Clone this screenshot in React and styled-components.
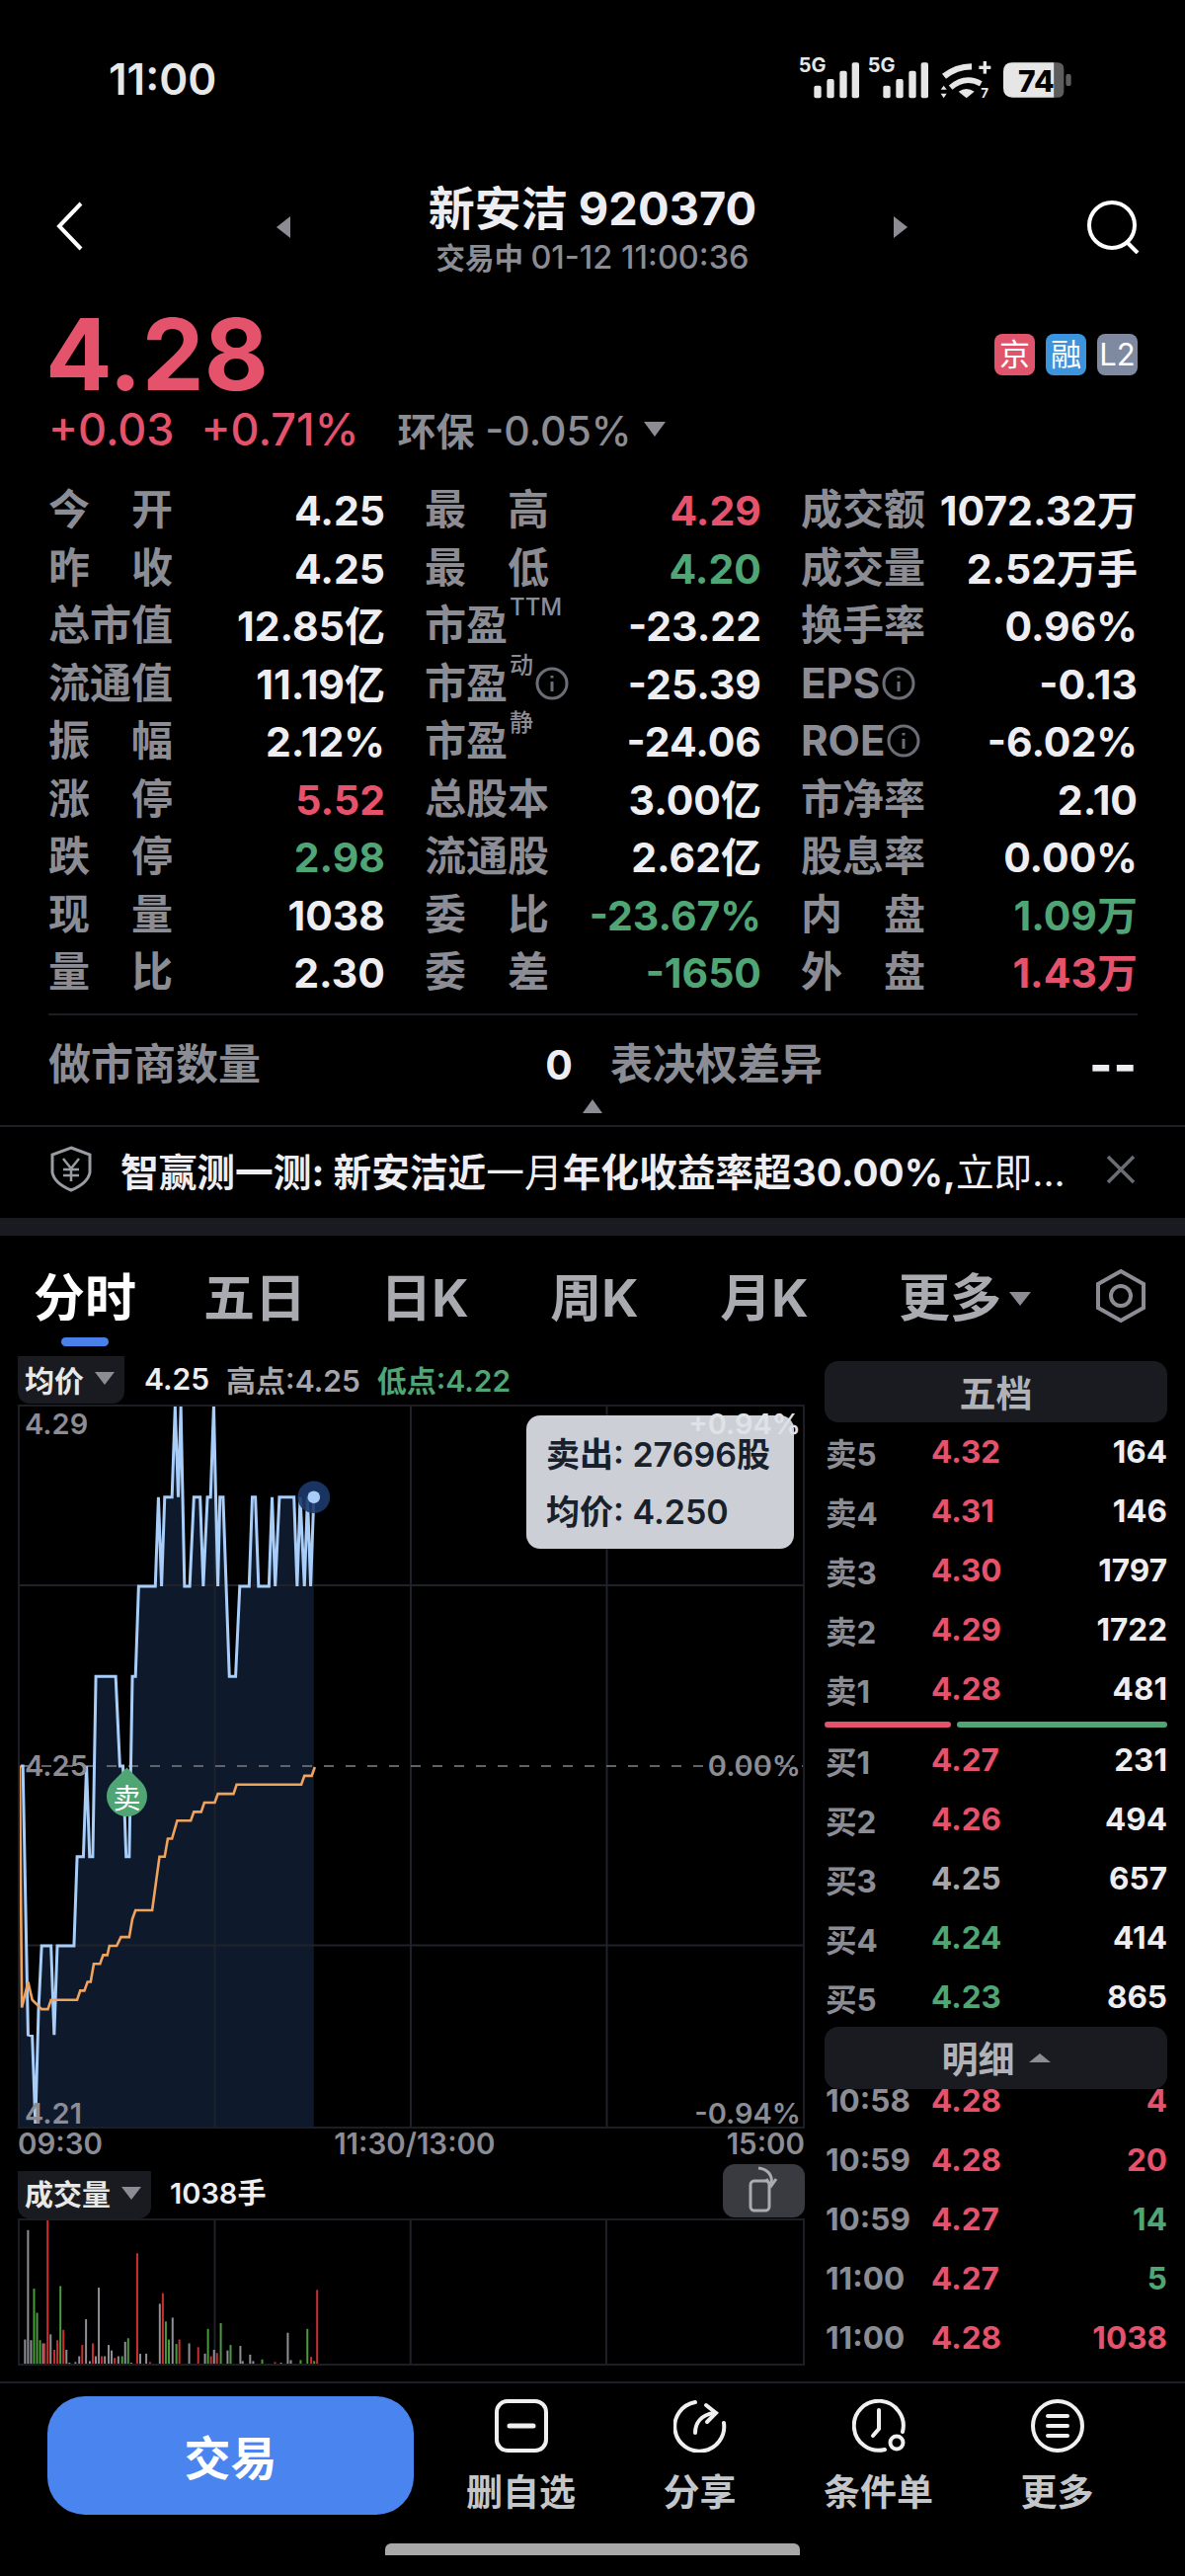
import React from "react";
import styled, { createGlobalStyle } from "styled-components";

const RED = "#e5526b";
const GREEN = "#4fa574";
const GRAY = "#8b8c94";
const WHITE = "#eeeef2";
const LINE = "#1c1e24";
const PANEL = "#1a1b20";

const tones = { red: RED, green: GREEN, gray: "#a5a7ad", white: WHITE };

const Global = createGlobalStyle`
  html, body { margin: 0; background: #000; }
  * { box-sizing: border-box; }
  body { font-family: Inter, "Noto Sans CJK SC", sans-serif; }
`;

const Page = styled.div`
  width: 1200px;
  height: 2608px;
  background: #000;
  color: ${WHITE};
  overflow: hidden;
`;

const StatusBar = styled.div`
  height: 120px;
  padding: 40px 100px 0 110px;
  display: flex;
  justify-content: space-between;
  align-items: center;
`;
const Clock = styled.div`
  font-size: 44px;
  font-weight: 600;
  color: #e8e8e8;
`;

const Nav = styled.div`
  margin-top: 62px;
  height: 96px;
  display: grid;
  grid-template-columns: 280px 15px 1fr 15px 280px;
  align-items: center;
`;
const BackIcon = styled.svg`
  margin-left: 57px;
  margin-top: -3px;
  display: block;
`;
const SearchIcon = styled.svg`
  justify-self: end;
  margin-right: 46px;
  display: block;
`;
const Title = styled.div`
  text-align: center;
  line-height: 56px;
  font-size: 47px;
  font-weight: 700;
`;
const SubTitle = styled.div`
  margin-top: 6px;
  text-align: center;
  line-height: 32px;
  font-size: 29.5px;
  color: ${GRAY};
  font-weight: 600;
  span {
    font-size: 32.5px;
    font-weight: 500;
  }
`;

const Caret = styled.i`
  display: block;
  flex: none;
  width: 0;
  height: 0;
  border-style: solid;
  border-color: transparent;
  ${(p) => p.$dir === "left" && `border-width: ${p.$h}px ${p.$w}px ${p.$h}px 0; border-right-color: ${p.$color};`}
  ${(p) => p.$dir === "right" && `border-width: ${p.$h}px 0 ${p.$h}px ${p.$w}px; border-left-color: ${p.$color};`}
  ${(p) => p.$dir === "down" && `border-width: ${p.$h}px ${p.$w}px 0 ${p.$w}px; border-top-color: ${p.$color};`}
  ${(p) => p.$dir === "up" && `border-width: 0 ${p.$w}px ${p.$h}px ${p.$w}px; border-bottom-color: ${p.$color};`}
`;

const Quote = styled.div`
  padding: 0 48px 0 49px;
`;
const PriceRow = styled.div`
  margin-top: 31px;
  height: 100px;
  display: flex;
  justify-content: space-between;
  align-items: center;
`;
const BigPrice = styled.div`
  margin-left: -3px;
  font-size: 100px;
  line-height: 100px;
  font-weight: 700;
  color: ${RED};
`;
const Tags = styled.div`
  display: flex;
  gap: 11px;
`;
const Tag = styled.span`
  width: 41px;
  height: 42px;
  border-radius: 8px;
  background: ${(p) => p.$bg};
  color: #fff;
  font-size: 31px;
  line-height: 41px;
  text-align: center;
`;
const DeltaRow = styled.div`
  height: 50px;
  display: flex;
  align-items: center;
  font-size: 45px;
  font-weight: 500;
  color: ${RED};
  gap: 27px;
`;
const Sector = styled.div`
  margin-left: 12px;
  display: flex;
  align-items: center;
  gap: 12px;
  font-size: 41px;
  color: ${GRAY};
`;
const SectorName = styled.span`
  font-size: 39px;
  font-weight: 600;
`;

const StatsGrid = styled.div`
  margin-top: 29px;
  display: grid;
  grid-template-columns: repeat(3, 1fr);
  column-gap: 40px;
  grid-auto-rows: 58.5px;
  padding-bottom: 14px;
  height: 539.5px;
  border-bottom: 2px solid ${LINE};
`;
const Stat = styled.div`
  display: flex;
  justify-content: space-between;
  align-items: center;
  white-space: nowrap;
`;
const StatLabel = styled.div`
  margin-top: -2px;
  display: flex;
  align-items: center;
  justify-content: ${(p) => (p.$spread ? "space-between" : "flex-start")};
  width: ${(p) => (p.$spread ? "126px" : "auto")};
  font-size: 42px;
  line-height: 50px;
  font-weight: 700;
  color: ${GRAY};
`;
const Sup = styled.sup`
  font-size: 24px;
  line-height: 1;
  font-weight: 500;
  align-self: flex-start;
  margin-top: -5px;
  margin-left: 2px;
`;
const StatValue = styled.div`
  font-size: 41px;
  line-height: 50px;
  font-weight: 700;
  color: ${(p) => tones[p.$tone || "white"]};
`;
const DashValue = styled(StatValue)`
  font-size: 50px;
  font-weight: 800;
  letter-spacing: 1px;
`;
const InfoIcon = styled.svg`
  display: block;
  margin-left: 2px;
`;

const MakerRow = styled.div`
  margin-top: 20px;
  height: 60px;
  display: grid;
  grid-template-columns: 531px 1fr;
  column-gap: 38px;
  align-items: center;
`;
const MakerLabel = styled(StatLabel)`
  font-size: 43px;
`;
const Collapse = styled.div`
  height: 33px;
  padding-top: 5px;
  display: flex;
  justify-content: center;
  border-bottom: 2px solid ${LINE};
`;

const Banner = styled.div`
  height: 92px;
  padding: 0 50px 6px 51px;
  display: flex;
  align-items: center;
`;
const BannerText = styled.div`
  margin-left: 29px;
  flex: 1;
  font-size: 38.7px;
  font-weight: 700;
  white-space: nowrap;
  overflow: hidden;
  span {
    font-weight: 400;
  }
`;
const Band = styled.div`
  height: 18px;
  background: ${PANEL};
`;

const Tabs = styled.div`
  height: 122px;
  padding-top: 34px;
  display: flex;
  align-items: flex-start;
`;
const Tab = styled.div`
  width: 172px;
  margin-left: ${(p) => p.$shift || 0}px;
  display: flex;
  flex-direction: column;
  align-items: center;
  font-size: 52px;
  line-height: 60px;
  font-weight: 700;
  color: ${(p) => (p.$on ? "#fff" : "#a9abb1")};
`;
const TabLabel = styled.div`
  display: flex;
  align-items: center;
  gap: 8px;
`;
const TabMark = styled.i`
  display: block;
  margin-top: 9px;
  width: 48px;
  height: 9px;
  border-radius: 5px;
  background: #4a80ea;
`;
const HexIcon = styled.svg`
  margin-left: 47px;
  display: block;
`;

const Main = styled.div`
  padding-left: 18px;
  display: grid;
  grid-template-columns: 797px 347px;
  column-gap: 20px;
`;
const LeftCol = styled.div`
  padding-bottom: 16px;
`;
const RightCol = styled.div`
  padding-top: 5px;
`;

const ChartHead = styled.div`
  height: 49px;
  display: flex;
  align-items: center;
  font-size: 30px;
  font-weight: 600;
`;
const Chip = styled.div`
  height: 48px;
  padding: 0 10px 3px 7px;
  margin-right: ${(p) => p.$gap}px;
  display: flex;
  align-items: center;
  gap: 11px;
  border-radius: 0 0 12px 12px;
  background: ${PANEL};
  font-weight: 700;
  color: #e8e8e8;
`;
const HeadText = styled.span`
  margin-right: 17px;
  margin-bottom: 3px;
  color: ${(p) => tones[p.$tone || "white"]};
`;

const ChartFrame = styled.div`
  position: relative;
  width: 797px;
  height: 733px;
  border: 2px solid ${LINE};
  svg {
    display: block;
  }
`;
const AxisLabel = styled.span`
  position: absolute;
  top: ${(p) => p.$top}px;
  ${(p) => (p.$right ? "right: 2px;" : "left: 5px;")}
  font-size: 29px;
  line-height: 36px;
  font-weight: 600;
  color: ${(p) => p.$color || GRAY};
`;
const Tooltip = styled.div`
  position: absolute;
  left: 513px;
  top: 9px;
  width: 271px;
  height: 135px;
  padding: 11px 0 0 20px;
  border-radius: 14px;
  background: #ccd0d6;
  color: #18202c;
  font-size: 34px;
  line-height: 58px;
  font-weight: 600;
`;
const Drop = styled.div`
  position: absolute;
  left: 88px;
  top: 374px;
  width: 41px;
  height: 41px;
  border-radius: 50% 0 50% 50%;
  background: ${GREEN};
  transform: rotate(-45deg);
  display: flex;
  align-items: center;
  justify-content: center;
  span {
    transform: rotate(45deg);
    color: #fff;
    font-size: 28px;
  }
`;

const TimeAxis = styled.div`
  height: 36px;
  padding-bottom: 6px;
  display: flex;
  justify-content: space-between;
  align-items: center;
  font-size: 29.5px;
  font-weight: 600;
  color: ${GRAY};
`;
const VolHead = styled.div`
  height: 55px;
  display: flex;
  align-items: flex-end;
  font-size: 29px;
  font-weight: 600;
  > span {
    margin-bottom: 7px;
  }
`;
const RotateBtn = styled.div`
  margin-left: auto;
  align-self: flex-start;
  width: 83px;
  height: 54px;
  border-radius: 12px;
  background: #3a3b40;
  svg {
    display: block;
  }
`;
const VolFrame = styled.div`
  width: 797px;
  height: 149px;
  border: 2px solid ${LINE};
  svg {
    display: block;
  }
`;

const PanelHead = styled.div`
  position: relative;
  z-index: 1;
  height: ${(p) => p.$h}px;
  display: flex;
  align-items: center;
  justify-content: center;
  gap: 14px;
  border-radius: 14px;
  background: ${PANEL};
  font-size: 37px;
  font-weight: 700;
  color: #b0b2b8;
`;
const BookRow = styled.div`
  height: 60px;
  padding-left: 1px;
  display: grid;
  grid-template-columns: 107px 1fr auto;
  align-items: center;
  font-size: 31.5px;
  font-weight: 700;
`;
const BookLabel = styled.span`
  color: ${GRAY};
`;
const BookPrice = styled.span`
  color: ${(p) => tones[p.$tone]};
`;
const BookQty = styled.span`
  color: ${(p) => tones[p.$tone || "white"]};
`;
const SplitBar = styled.div`
  margin: 3px 0;
  height: 6px;
  display: flex;
  gap: 6px;
`;
const SplitPart = styled.i`
  display: block;
  width: ${(p) => p.$w}px;
  border-radius: 3px;
  background: ${(p) => p.$color};
`;
const TradeList = styled.div`
  margin-top: -18px;
`;

const Footer = styled.div`
  height: 164px;
  padding: 13px 0 0 48px;
  display: flex;
  border-top: 2px solid ${LINE};
`;
const TradeBtn = styled.div`
  width: 371px;
  height: 120px;
  border-radius: 38px;
  background: #4a84ee;
  color: #fff;
  font-size: 47px;
  font-weight: 700;
  display: flex;
  align-items: center;
  justify-content: center;
`;
const Actions = styled.div`
  margin-left: 18px;
  display: grid;
  grid-template-columns: repeat(4, 181px);
`;
const Action = styled.div`
  padding-top: 3px;
  display: flex;
  flex-direction: column;
  align-items: center;
  font-size: 37px;
  font-weight: 700;
  line-height: 44px;
  color: #c5c6ca;
  svg {
    display: block;
    margin-bottom: 19px;
  }
`;
const HomeBar = styled.div`
  margin: 0 auto;
  width: 420px;
  height: 12px;
  border-radius: 6px 6px 0 0;
  background: #a8a8a8;
`;

const stats = [
  [["今", "开"], "4.25"], [["最", "高"], "4.29", "red"], ["成交额", "1072.32万"],
  [["昨", "收"], "4.25"], [["最", "低"], "4.20", "green"], ["成交量", "2.52万手"],
  ["总市值", "12.85亿"], ["市盈", "-23.22", null, "TTM"], ["换手率", "0.96%"],
  ["流通值", "11.19亿"], ["市盈", "-25.39", null, "动", true], ["EPS", "-0.13", null, null, true],
  [["振", "幅"], "2.12%"], ["市盈", "-24.06", null, "静"], ["ROE", "-6.02%", null, null, true],
  [["涨", "停"], "5.52", "red"], ["总股本", "3.00亿"], ["市净率", "2.10"],
  [["跌", "停"], "2.98", "green"], ["流通股", "2.62亿"], ["股息率", "0.00%"],
  [["现", "量"], "1038"], [["委", "比"], "-23.67%", "green"], [["内", "盘"], "1.09万", "green"],
  [["量", "比"], "2.30"], [["委", "差"], "-1650", "green"], [["外", "盘"], "1.43万", "red"],
];

const asks = [
  ["卖5", "4.32", "164"], ["卖4", "4.31", "146"], ["卖3", "4.30", "1797"],
  ["卖2", "4.29", "1722"], ["卖1", "4.28", "481"],
];
const bids = [
  ["买1", "4.27", "231", "red"], ["买2", "4.26", "494", "red"], ["买3", "4.25", "657", "gray"],
  ["买4", "4.24", "414", "green"], ["买5", "4.23", "865", "green"],
];
const trades = [
  ["10:58", "4.28", "4", "red"], ["10:59", "4.28", "20", "red"], ["10:59", "4.27", "14", "green"],
  ["11:00", "4.27", "5", "green"], ["11:00", "4.28", "1038", "red"],
];

// traced from the reference, in the chart's own units
const pricePts = "38,816 42,816 52,1338 60,1340 66,1510 72,1290 78,1165 96,1165 102,1338 108,1165 140,1165 146,992 158,992 164,816 170,992 176,992 182,642 220,642 228,816 234,816 240,992 246,992 252,642 258,642 264,467 296,467 302,294 308,467 314,294 328,294 334,118 340,294 345,118 352,467 362,467 370,294 382,294 388,467 396,294 402,294 408,118 416,467 420,294 426,294 438,642 450,642 458,467 476,467 482,294 488,294 494,467 514,467 520,294 526,467 534,294 562,294 568,467 574,294 582,467 588,294 594,467 600,294";
const avgPts = "36,816 40,1285 52,1235 60,1270 78,1288 90,1288 96,1270 146,1270 152,1252 160,1252 166,1235 172,1235 178,1200 190,1200 196,1183 204,1183 208,1165 222,1165 230,1148 246,1148 252,1113 258,1096 290,1096 304,992 314,992 320,957 328,957 338,922 364,922 370,905 384,905 390,887 410,887 416,870 446,870 452,852 576,852 582,835 596,835 602,818";

const volBars = [
  [31, 688, "g"], [35, 348, "g"], [39, 690, "g"], [43, 530, "u"], [47, 605, "u"], [51, 690, "u"], [55, 700, "g"],
  [57, 700, "r"], [61, 315, "r"], [65, 672, "g"], [70, 720, "r"], [74, 690, "r"], [78, 522, "u"], [82, 658, "r"],
  [86, 720, "g"], [90, 760, "g"], [98, 758, "g"], [103, 740, "g"], [107, 705, "r"], [112, 625, "g"], [117, 755, "g"],
  [121, 700, "r"], [125, 740, "g"], [129, 527, "g"], [133, 740, "r"], [137, 740, "g"], [142, 705, "g"], [146, 722, "g"],
  [150, 745, "r"], [155, 740, "g"], [160, 740, "u"], [164, 695, "g"], [168, 684, "u"], [172, 760, "g"], [180, 420, "r"],
  [184, 732, "g"], [192, 732, "g"], [197, 758, "r"], [210, 577, "g"], [214, 544, "r"], [218, 632, "u"], [222, 688, "u"],
  [227, 620, "g"], [232, 702, "u"], [236, 688, "r"], [249, 700, "g"], [261, 712, "r"], [270, 732, "g"], [274, 655, "u"],
  [278, 740, "r"], [282, 720, "g"], [286, 730, "r"], [291, 637, "u"], [300, 722, "g"], [304, 705, "u"], [317, 708, "g"],
  [320, 755, "g"], [330, 735, "g"], [334, 755, "g"], [346, 750, "u"], [363, 758, "r"], [371, 760, "g"], [380, 667, "g"],
  [384, 752, "g"], [397, 752, "u"], [406, 655, "u"], [411, 742, "r"], [415, 755, "u"], [419, 534, "r"],
];
const barColors = { r: "#c9302f", u: "#4a9a3e", g: "#8f9096" };

function StatusIcons() {
  const signal = (dx) => (
    <g fill="#e6e6e6">
      <text x={dx + 86} y="100" fontSize="60" fontWeight="700" fontFamily="Inter, sans-serif">5G</text>
      <rect x={dx + 133} y="140" width="22" height="38" rx="6" />
      <rect x={dx + 172} y="120" width="22" height="58" rx="6" />
      <rect x={dx + 211} y="95" width="22" height="83" rx="6" />
      <rect x={dx + 248} y="70" width="22" height="108" rx="6" />
    </g>
  );
  return (
    <svg width="320" height="80" viewBox="0 0 960 240">
      {signal(0)}
      {signal(210)}
      <g fill="none" stroke="#e6e6e6" strokeLinecap="butt">
        <path d="M528 112 Q565 82 612 82" strokeWidth="19" />
        <path d="M548 146 Q592 108 640 134" strokeWidth="17" />
      </g>
      <g fill="#e6e6e6">
        <path d="M572 158 Q596 142 620 158 L596 178 Z" />
        <path d="M518 152 L527 140 L536 152 Z M518 164 L536 164 L527 178 Z" />
        <rect x="634" y="80" width="36" height="10" />
        <rect x="647" y="66" width="10" height="38" />
        <text x="640" y="178" fontSize="40" fontWeight="700" fontFamily="Inter, sans-serif">7</text>
      </g>
      <path d="M862 70 H872 Q892 70 892 90 V158 Q892 176 872 176 H862 Z" fill="#5d5d5d" />
      <rect x="898" y="105" width="16" height="36" rx="6" fill="#5d5d5d" />
      <path d="M862 70 H736 Q708 70 708 98 V148 Q708 176 736 176 H862 Z" fill="#e6e6e6" />
      <text x="808" y="160" textAnchor="middle" fontSize="90" fontWeight="800" fontFamily="Inter, sans-serif" fill="#000">74</text>
    </svg>
  );
}

function Info() {
  return (
    <InfoIcon width="34" height="36" viewBox="0 0 34 36" fill="none" stroke="#6b6e76" strokeWidth="3">
      <circle cx="17" cy="18" r="15" />
      <path d="M17 16 V26" />
      <path d="M17 10 V12.5" />
    </InfoIcon>
  );
}

function StatCell({ label, value, tone, sup, info }) {
  return (
    <Stat>
      {Array.isArray(label) ? (
        <StatLabel $spread>
          <span>{label[0]}</span>
          <span>{label[1]}</span>
        </StatLabel>
      ) : (
        <StatLabel>
          {label}
          {sup && <Sup>{sup}</Sup>}
          {info && <Info />}
        </StatLabel>
      )}
      <StatValue $tone={tone}>{value}</StatValue>
    </Stat>
  );
}

function PriceChart() {
  return (
    <ChartFrame>
      <svg width="793" height="729" viewBox="36 118 1502 1398" preserveAspectRatio="none">
        <polygon points={`${pricePts} 600,1516 36,1516`} fill="#0e1a2c" />
        <path d="M410 118 V1516 M786 118 V1516 M1162 118 V1516 M36 465 H1538 M36 1164 H1538" stroke="#1f222a" strokeWidth="2" vectorEffect="non-scaling-stroke" />
        <path d="M36 816 H1538" stroke="#60636a" strokeWidth="2" strokeDasharray="10 12" vectorEffect="non-scaling-stroke" />
        <polyline points={pricePts} fill="none" stroke="#a8cdf8" strokeWidth="3" vectorEffect="non-scaling-stroke" />
        <polyline points={avgPts} fill="none" stroke="#efa35c" strokeWidth="2.6" vectorEffect="non-scaling-stroke" />
        <circle cx="600" cy="294" r="31" fill="#1d3a6b" fillOpacity="0.9" />
        <circle cx="600" cy="294" r="12" fill="#a8cdf8" />
      </svg>
      <AxisLabel $top={0}>4.29</AxisLabel>
      <AxisLabel $top={346}>4.25</AxisLabel>
      <AxisLabel $top={698}>4.21</AxisLabel>
      <AxisLabel $top={346} $right>0.00%</AxisLabel>
      <AxisLabel $top={698} $right>-0.94%</AxisLabel>
      <Drop><span>卖</span></Drop>
      <Tooltip>
        <div>卖出: 27696股</div>
        <div>均价: 4.250</div>
      </Tooltip>
      <AxisLabel $top={0} $right $color="#dfe2e6">+0.94%</AxisLabel>
    </ChartFrame>
  );
}

function VolumeChart() {
  return (
    <VolFrame>
      <svg width="793" height="145" viewBox="24 318 1040 445" preserveAspectRatio="none">
        <path d="M283 318 V763 M543 318 V763 M803 318 V763" stroke="#1f222a" strokeWidth="2" vectorEffect="non-scaling-stroke" />
        {volBars.map(([x, top, c], i) => (
          <line key={i} x1={x} x2={x} y1={top} y2="763" stroke={barColors[c]} strokeWidth="2" vectorEffect="non-scaling-stroke" />
        ))}
      </svg>
    </VolFrame>
  );
}

export default function App() {
  return (
    <Page>
      <Global />
      <StatusBar>
        <Clock>11:00</Clock>
        <StatusIcons />
      </StatusBar>

      <Nav>
        <BackIcon width="28" height="50" viewBox="0 0 28 50" fill="none" stroke="#fff" strokeWidth="4">
          <path d="M25 2 L3 25 L25 48" />
        </BackIcon>
        <Caret $dir="left" $w={14} $h={11} $color={GRAY} />
        <div>
          <Title>新安洁 920370</Title>
          <SubTitle>交易中 <span>01-12 11:00:36</span></SubTitle>
        </div>
        <Caret $dir="right" $w={14} $h={11} $color={GRAY} />
        <SearchIcon width="54" height="54" viewBox="0 0 54 54" fill="none" stroke="#fff" strokeWidth="4">
          <circle cx="26" cy="25" r="23" />
          <path d="M41 42 L52 53" />
        </SearchIcon>
      </Nav>

      <Quote>
        <PriceRow>
          <BigPrice>4.28</BigPrice>
          <Tags>
            <Tag $bg="#e0556b">京</Tag>
            <Tag $bg="#3c94dc">融</Tag>
            <Tag $bg="#7f8aa0">L2</Tag>
          </Tags>
        </PriceRow>
        <DeltaRow>
          <span>+0.03</span>
          <span>+0.71%</span>
          <Sector>
            <span><SectorName>环保</SectorName> -0.05%</span>
            <Caret $dir="down" $w={11} $h={15} $color={GRAY} />
          </Sector>
        </DeltaRow>
        <StatsGrid>
          {stats.map(([label, value, tone, sup, info], i) => (
            <StatCell key={i} label={label} value={value} tone={tone} sup={sup} info={info} />
          ))}
        </StatsGrid>
        <MakerRow>
          <Stat>
            <MakerLabel>做市商数量</MakerLabel>
            <StatValue>0</StatValue>
          </Stat>
          <Stat>
            <MakerLabel>表决权差异</MakerLabel>
            <DashValue>--</DashValue>
          </Stat>
        </MakerRow>
      </Quote>
      <Collapse>
        <Caret $dir="up" $w={10} $h={14} $color={GRAY} />
      </Collapse>

      <Banner>
        <svg width="42" height="47" viewBox="0 0 42 47" fill="none" stroke="#9a9ca3" strokeWidth="3">
          <path d="M21 2 L40 9 V27 Q38 38 21 45 Q4 38 2 27 V9 Z" />
          <path d="M13 13 L21 23 L29 13 M21 23 V36 M13 24 H29 M13 30 H29" strokeWidth="2.5" />
        </svg>
        <BannerText>
          智赢测一测: 新安洁近<span>一月</span>年化收益率超30.00%,<span>立即...</span>
        </BannerText>
        <svg width="30" height="30" viewBox="0 0 30 30" fill="none" stroke="#6b6d75" strokeWidth="3.5">
          <path d="M2 2 L28 28 M28 2 L2 28" />
        </svg>
      </Banner>
      <Band />

      <Tabs>
        <Tab $on>
          <TabLabel>分时</TabLabel>
          <TabMark />
        </Tab>
        <Tab><TabLabel>五日</TabLabel></Tab>
        <Tab><TabLabel>日K</TabLabel></Tab>
        <Tab><TabLabel>周K</TabLabel></Tab>
        <Tab><TabLabel>月K</TabLabel></Tab>
        <Tab $shift={31}>
          <TabLabel>
            更多
            <Caret $dir="down" $w={11} $h={14} $color={GRAY} />
          </TabLabel>
        </Tab>
        <HexIcon width="50" height="54" viewBox="0 0 50 54" fill="none" stroke={GRAY} strokeWidth="4">
          <path d="M25 2 L48 15 V39 L25 52 L2 39 V15 Z" />
          <circle cx="25" cy="27" r="10" />
        </HexIcon>
      </Tabs>

      <Main>
        <LeftCol>
          <ChartHead>
            <Chip $gap={20}>
              均价
              <Caret $dir="down" $w={10} $h={13} $color={GRAY} />
            </Chip>
            <HeadText>4.25</HeadText>
            <HeadText $tone="gray">高点:4.25</HeadText>
            <HeadText $tone="green">低点:4.22</HeadText>
          </ChartHead>
          <PriceChart />
          <TimeAxis>
            <span>09:30</span>
            <span>11:30/13:00</span>
            <span>15:00</span>
          </TimeAxis>
          <VolHead>
            <Chip $gap={19}>
              成交量
              <Caret $dir="down" $w={10} $h={13} $color={GRAY} />
            </Chip>
            <HeadText>1038手</HeadText>
            <RotateBtn>
              <svg width="83" height="54" viewBox="0 0 83 54" fill="none" stroke="#a9abb1" strokeWidth="3">
                <rect x="28" y="17" width="19" height="30" rx="4" />
                <path d="M36 4 C46 5 51 12 49 21" />
                <path d="M44 15 L49 22 L54 15" />
              </svg>
            </RotateBtn>
          </VolHead>
          <VolumeChart />
        </LeftCol>

        <RightCol>
          <PanelHead $h={62}>五档</PanelHead>
          {asks.map(([label, price, qty]) => (
            <BookRow key={label}>
              <BookLabel>{label}</BookLabel>
              <BookPrice $tone="red">{price}</BookPrice>
              <BookQty>{qty}</BookQty>
            </BookRow>
          ))}
          <SplitBar>
            <SplitPart $w={128} $color={RED} />
            <SplitPart $w={213} $color={GREEN} />
          </SplitBar>
          {bids.map(([label, price, qty, tone]) => (
            <BookRow key={label}>
              <BookLabel>{label}</BookLabel>
              <BookPrice $tone={tone}>{price}</BookPrice>
              <BookQty>{qty}</BookQty>
            </BookRow>
          ))}
          <PanelHead $h={63}>
            明细
            <Caret $dir="up" $w={11} $h={9} $color={GRAY} />
          </PanelHead>
          <TradeList>
            {trades.map(([time, price, qty, tone], i) => (
              <BookRow key={i}>
                <BookLabel>{time}</BookLabel>
                <BookPrice $tone="red">{price}</BookPrice>
                <BookQty $tone={tone}>{qty}</BookQty>
              </BookRow>
            ))}
          </TradeList>
        </RightCol>
      </Main>

      <Footer>
        <TradeBtn>交易</TradeBtn>
        <Actions>
          <Action>
            <svg width="54" height="54" viewBox="0 0 54 54" fill="none" stroke="#f0f0f0" strokeWidth="4">
              <rect x="2" y="2" width="50" height="50" rx="11" />
              <path d="M15 27 H39" strokeWidth="5" strokeLinecap="round" />
            </svg>
            删自选
          </Action>
          <Action>
            <svg width="54" height="54" viewBox="0 0 54 54" fill="none" stroke="#f0f0f0" strokeWidth="4" strokeLinecap="round">
              <path d="M22 3 A25 25 0 1 0 51 24" />
              <path d="M22 34 C22 24 28 16 41 14" />
              <path d="M33 6 L43 14 L34 23" />
            </svg>
            分享
          </Action>
          <Action>
            <svg width="54" height="54" viewBox="0 0 54 54" fill="none" stroke="#f0f0f0" strokeWidth="4" strokeLinecap="round">
              <path d="M33 51 A25 25 0 1 1 51 33" />
              <circle cx="45" cy="44" r="6.5" />
              <path d="M27 11 V30 L21 37" />
            </svg>
            条件单
          </Action>
          <Action>
            <svg width="54" height="54" viewBox="0 0 54 54" fill="none" stroke="#f0f0f0" strokeWidth="4" strokeLinecap="round">
              <circle cx="27" cy="27" r="25" />
              <path d="M17 17 H37 M17 27 H37 M17 37 H37" />
            </svg>
            更多
          </Action>
        </Actions>
      </Footer>
      <HomeBar />
    </Page>
  );
}
